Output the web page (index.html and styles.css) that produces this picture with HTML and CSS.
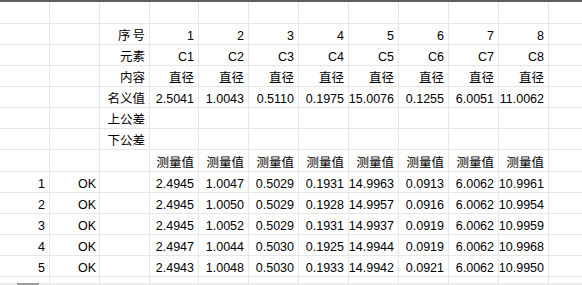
FILE: index.html
```html
<!DOCTYPE html>
<html lang="zh">
<head>
<meta charset="utf-8">
<link rel="stylesheet" href="styles.css">
</head>
<body>
<div class="sheet">
  <div class="grid">
    <div class="row r-tall"><div></div><div></div><div></div><div></div><div></div><div></div><div></div><div></div><div></div><div></div><div></div><div></div></div>
    <div class="row"><div></div><div></div><div class="wide">序号</div><div>1</div><div>2</div><div>3</div><div>4</div><div>5</div><div>6</div><div>7</div><div>8</div><div></div></div>
    <div class="row"><div></div><div></div><div>元素</div><div>C1</div><div>C2</div><div>C3</div><div>C4</div><div>C5</div><div>C6</div><div>C7</div><div>C8</div><div></div></div>
    <div class="row"><div></div><div></div><div>内容</div><div>直径</div><div>直径</div><div>直径</div><div>直径</div><div>直径</div><div>直径</div><div>直径</div><div>直径</div><div></div></div>
    <div class="row"><div></div><div></div><div>名义值</div><div>2.5041</div><div>1.0043</div><div>0.5110</div><div>0.1975</div><div>15.0076</div><div>0.1255</div><div>6.0051</div><div>11.0062</div><div></div></div>
    <div class="row"><div></div><div></div><div>上公差</div><div></div><div></div><div></div><div></div><div></div><div></div><div></div><div></div><div></div></div>
    <div class="row"><div></div><div></div><div>下公差</div><div></div><div></div><div></div><div></div><div></div><div></div><div></div><div></div><div></div></div>
    <div class="row r-tall"><div></div><div></div><div></div><div>测量值</div><div>测量值</div><div>测量值</div><div>测量值</div><div>测量值</div><div>测量值</div><div>测量值</div><div>测量值</div><div></div></div>
    <div class="row"><div>1</div><div class="ok">OK</div><div></div><div>2.4945</div><div>1.0047</div><div>0.5029</div><div>0.1931</div><div>14.9963</div><div>0.0913</div><div>6.0062</div><div>10.9961</div><div></div></div>
    <div class="row"><div>2</div><div class="ok">OK</div><div></div><div>2.4945</div><div>1.0050</div><div>0.5029</div><div>0.1928</div><div>14.9957</div><div>0.0916</div><div>6.0062</div><div>10.9954</div><div></div></div>
    <div class="row"><div>3</div><div class="ok">OK</div><div></div><div>2.4945</div><div>1.0052</div><div>0.5029</div><div>0.1931</div><div>14.9937</div><div>0.0919</div><div>6.0062</div><div>10.9959</div><div></div></div>
    <div class="row"><div>4</div><div class="ok">OK</div><div></div><div>2.4947</div><div>1.0044</div><div>0.5030</div><div>0.1925</div><div>14.9944</div><div>0.0919</div><div>6.0062</div><div>10.9968</div><div></div></div>
    <div class="row"><div>5</div><div class="ok">OK</div><div></div><div>2.4943</div><div>1.0048</div><div>0.5030</div><div>0.1933</div><div>14.9942</div><div>0.0921</div><div>6.0062</div><div>10.9950</div><div></div></div>
    <div class="row r-end"><div></div><div></div><div></div><div></div><div></div><div></div><div></div><div></div><div></div><div></div><div></div><div></div></div>
  </div>
  <div class="hscroll"><div class="thumb"></div></div>
</div>
</body>
</html>
```

FILE: styles.css
```css
html, body {
  margin: 0;
  padding: 0;
  background: #ffffff;
  overflow: hidden;
}

.sheet {
  width: 582px;
  height: 285px;
  display: flex;
  flex-direction: column;
  border-top: 2px solid #5e5e5e;
  box-sizing: border-box;
  font-family: "Liberation Sans", "Noto Sans CJK SC", sans-serif;
  font-size: 12.5px;
  color: #000000;
}

.grid {
  display: flex;
  flex-direction: column;
  gap: 1px;
  background: #e6e6e6;
}

.row {
  display: grid;
  grid-template-columns: 49px 49px 49px 48px 49px 49px 49px 49px 49px 49px 49px 1fr;
  column-gap: 1px;
  height: 20px;
}

.row.r-tall {
  height: 21px;
}

.row.r-end {
  height: 6px;
}

.row > div {
  background: #ffffff;
  display: flex;
  justify-content: flex-end;
  align-items: flex-end;
  line-height: 14px;
  padding: 0 4px 1px 0;
  white-space: nowrap;
  overflow: hidden;
}

.row > div.ok {
  padding-right: 3px;
}

.row > div.wide {
  letter-spacing: 2px;
  padding-right: 2px;
}

.hscroll {
  height: 2px;
  background: #ececec;
  flex: none;
}

.thumb {
  width: 22px;
  height: 2px;
  margin-left: 17px;
  background: #9c9c9c;
}
```
